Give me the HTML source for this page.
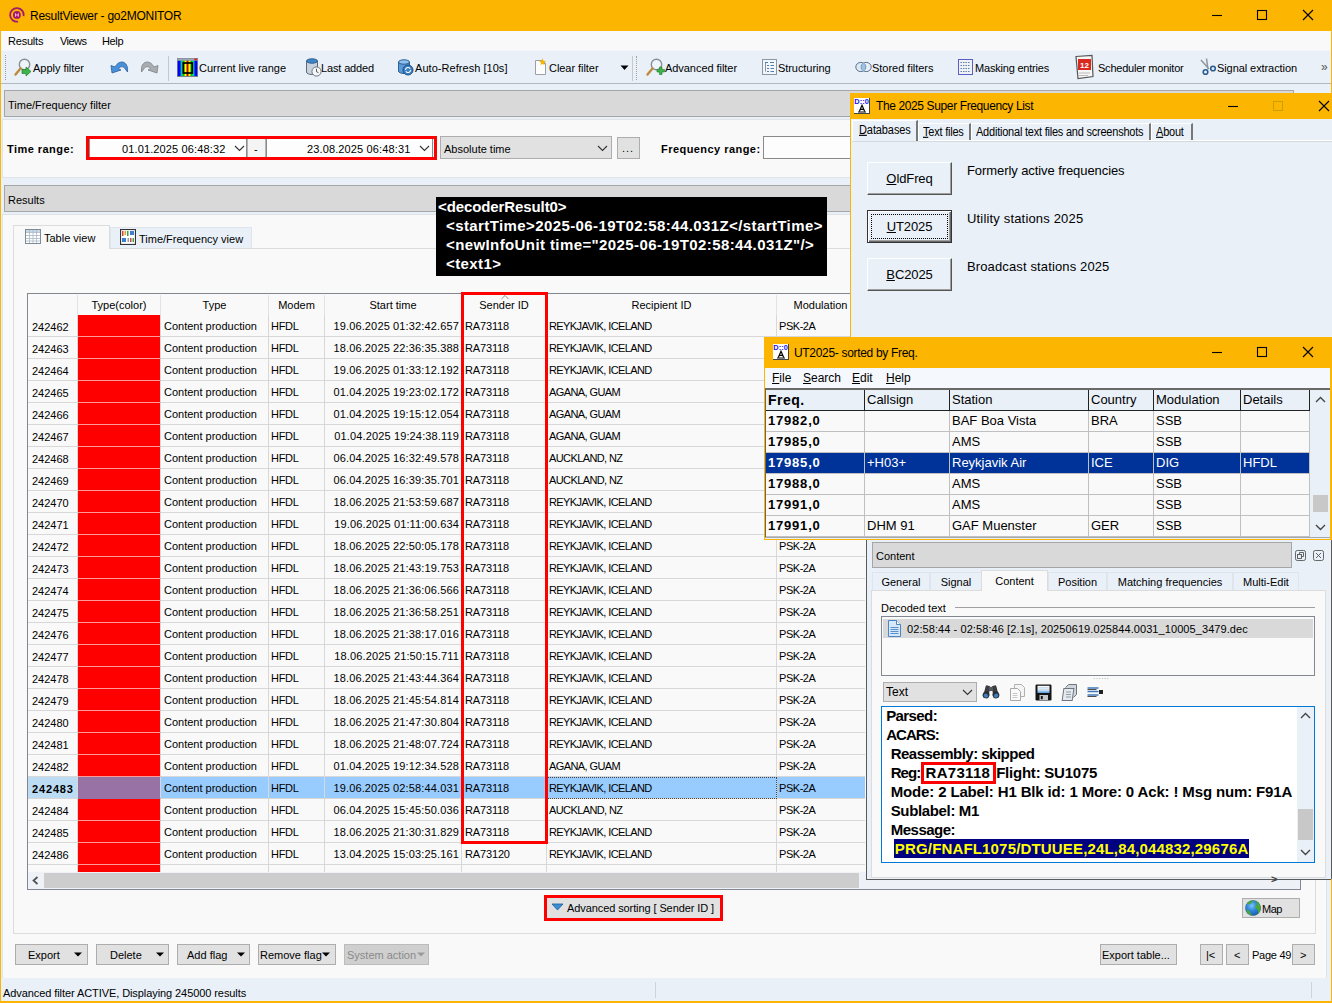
<!DOCTYPE html><html><head><meta charset="utf-8"><title>ResultViewer - go2MONITOR</title><style>
html,body{margin:0;padding:0}
body{width:1332px;height:1003px;overflow:hidden;position:relative;background:#fcb500;font-family:"Liberation Sans",sans-serif;font-size:11px;color:#000}
div,span,svg{position:absolute;box-sizing:border-box}
span.t,span.b{white-space:pre;line-height:14px;height:14px}
span.b{font-weight:bold}
.btn{background:#e1e1e1;border:1px solid #adadad}
.hdr{background:#d9d9d9;border:1px solid #a6a6a6}
.cell{border-right:1px solid #d8d8d8;border-bottom:1px solid #d8d8d8;line-height:23px;white-space:pre;overflow:hidden}
.ut{font-size:13px;line-height:20px;white-space:pre;border-right:1px solid #c0c0c0;border-bottom:1px solid #c0c0c0;overflow:hidden;padding-left:2px}
.ut.f{font-weight:bold;letter-spacing:0.8px}
.ct{font-weight:bold;font-size:15px;line-height:19px;height:19px;white-space:pre;letter-spacing:-0.14px}
.bx{font-weight:bold;font-size:15px;line-height:19px;height:19px;white-space:pre;color:#fff;letter-spacing:0.4px}
u{text-decoration-thickness:1px;text-underline-offset:1px}
</style></head><body>
<div style="left:1px;top:31px;width:1330px;height:970px;background:#e9f0f8"></div>
<svg style="left:0px;top:0px" width="30" height="30" viewBox="0 0 30 30"><path d="M23.600 16.080A6.800 6.800 0 1 0 18.080 21.600" fill="none" stroke="#a3186c" stroke-width="1.800"/><circle cx="16.900" cy="14.900" r="3.900" fill="#a3186c"/><path d="M15.500 13.300v3.400M18.300 13.300v3.400M15.500 15h2.800" stroke="#f0b8d6" stroke-width="1" fill="none"/></svg>
<span class="t" style="left:30px;top:8px;font-size:12px;letter-spacing:-0.25px;line-height:16px;height:16px">ResultViewer - go2MONITOR</span>
<svg style="left:1205px;top:5px" width="120" height="22" viewBox="0 0 120 22"><path d="M7 10.5h10" stroke="#000" stroke-width="1.1" fill="none"/><rect x="52.5" y="5.5" width="9" height="9" stroke="#000" stroke-width="1.1" fill="none"/><path d="M98 5l10 10M108 5l-10 10" stroke="#000" stroke-width="1.1" fill="none"/></svg>
<div style="left:1px;top:31px;width:1330px;height:19px;background:#f9f9f9"></div>
<span class="t" style="left:8px;top:34px;letter-spacing:-0.211px;">Results</span>
<span class="t" style="left:60px;top:34px;letter-spacing:-0.529px;">Views</span>
<span class="t" style="left:102px;top:34px;letter-spacing:-0.356px;">Help</span>
<div style="left:1px;top:50px;width:1330px;height:33px;background:#e9f0f8;border-top:1px solid #f2f6fb"></div>
<div style="left:1px;top:83px;width:1330px;height:1px;background:#b4b8bc"></div>
<div style="left:5px;top:55px;width:2px;height:25px;border-left:1px dotted #9a9a9a;"></div>
<div style="left:636px;top:56px;width:2px;height:24px;border-left:1px dotted #a0a0a0;"></div>
<div style="left:168px;top:56px;width:1px;height:25px;background:#c5c9ce"></div>
<div style="left:632px;top:56px;width:1px;height:25px;background:#c5c9ce"></div>
<span class="t" style="left:33px;top:61px;letter-spacing:-0.029px;">Apply filter</span>
<span class="t" style="left:199px;top:61px;letter-spacing:-0.024px;">Current live range</span>
<span class="t" style="left:321px;top:61px;letter-spacing:-0.144px;">Last added</span>
<span class="t" style="left:415px;top:61px;letter-spacing:0.044px;">Auto-Refresh [10s]</span>
<span class="t" style="left:549px;top:61px;letter-spacing:-0.052px;">Clear filter</span>
<span class="t" style="left:665px;top:61px;letter-spacing:-0.051px;">Advanced filter</span>
<span class="t" style="left:778px;top:61px;letter-spacing:-0.063px;">Structuring</span>
<span class="t" style="left:872px;top:61px;letter-spacing:-0.018px;">Stored filters</span>
<span class="t" style="left:975px;top:61px;letter-spacing:-0.202px;">Masking entries</span>
<span class="t" style="left:1098px;top:61px;letter-spacing:-0.222px;">Scheduler monitor</span>
<span class="t" style="left:1217px;top:61px;letter-spacing:-0.078px;">Signal extraction</span>
<span class="t" style="left:1321px;top:60px;font-size:12px;color:#555">»</span>
<svg style="left:620px;top:65px" width="9" height="6"><path d="M0.5 0.5h8L4.5 5z" fill="#000"/></svg>
<svg style="left:14px;top:58px" width="18" height="19" viewBox="0 0 18 19"><circle cx="10.5" cy="6.5" r="5.2" fill="#eef6fb" stroke="#8a8f94" stroke-width="1.4"/><path d="M6.5 10.5L1.5 16.5" stroke="#c08a3c" stroke-width="2.4" stroke-linecap="round"/><path d="M8 11.5h4v-2.5l5 4.5-5 4.5v-2.5h-4z" fill="#3cb54a" stroke="#1f7a2b" stroke-width="0.7"/></svg>
<svg style="left:110px;top:60px" width="19" height="15" viewBox="0 0 19 15"><path d="M2 13L1 5.5l4 1.5C7 3 11 1 14 2.5c3 1.500 4 5 3.500 9.500l-3-4C13 6 10 6.500 8.500 8.500L11 10z" fill="#4a90d9" stroke="#2a5f9e" stroke-width="0.8"/></svg>
<svg style="left:140px;top:60px" width="19" height="15" viewBox="0 0 19 15"><path d="M17 13l1-7.500-4 1.500C12 3 8 1 5 2.500 2 4 1 7.500 1.500 12l3-4C6 6 9 6.500 10.500 8.500L8 10z" fill="#a9acb0" stroke="#7d8186" stroke-width="0.8"/></svg>
<svg style="left:177px;top:58px" width="21" height="19" viewBox="0 0 21 19"><defs><linearGradient id="sp" x1="0" x2="1" y1="0" y2="0"><stop offset="0" stop-color="#0000f0"/><stop offset="0.1" stop-color="#0000ff"/><stop offset="0.2" stop-color="#00d8b0"/><stop offset="0.3" stop-color="#00b800"/><stop offset="0.4" stop-color="#ffff00"/><stop offset="0.5" stop-color="#c00000"/><stop offset="0.6" stop-color="#ffff00"/><stop offset="0.7" stop-color="#00b800"/><stop offset="0.8" stop-color="#00e0a0"/><stop offset="0.9" stop-color="#0000ff"/><stop offset="1" stop-color="#0000f0"/></linearGradient></defs><rect x="0" y="0" width="21" height="19" fill="#7c838a"/><rect x="0.5" y="0.5" width="20" height="2.3" fill="#9aa6b4"/><rect x="17.300" y="0.600" width="2.800" height="1.600" fill="#e02020"/><rect x="0.800" y="2.800" width="19.400" height="15.200" fill="url(#sp)"/><rect x="6.300" y="5" width="9" height="10" fill="none" stroke="#000" stroke-width="1.700"/></svg>
<svg style="left:305px;top:58px" width="17" height="19" viewBox="0 0 17 19"><path d="M1.500 3v11c0 1.500 2.500 2.500 5.500 2.500s5.500-1 5.500-2.500V3" fill="#c9d3dd" stroke="#5f6b78"/><ellipse cx="7" cy="3" rx="5.500" ry="2.200" fill="#3f86c9" stroke="#2c5f92"/><circle cx="11.500" cy="13.500" r="4.600" fill="#f4f6f8" stroke="#6b7480"/><path d="M11.500 10.800v2.900l2 1" stroke="#444" fill="none" stroke-width="0.9"/></svg>
<svg style="left:397px;top:58px" width="18" height="19" viewBox="0 0 18 19"><path d="M1.500 4v9c0 1.500 2.500 2.500 5.500 2.500s5.500-1 5.500-2.500V4" fill="#5a9ad6" stroke="#2c5f92"/><ellipse cx="7" cy="4" rx="5.500" ry="2.200" fill="#8fc1ee" stroke="#2c5f92"/><circle cx="11" cy="12" r="5" fill="#3b7fc4" stroke="#1d4f86"/><path d="M8.500 12a2.600 2.600 0 0 1 4.800-1.300M13.600 12a2.600 2.600 0 0 1-4.800 1.300" stroke="#fff" fill="none" stroke-width="1.100"/></svg>
<svg style="left:533px;top:58px" width="15" height="19" viewBox="0 0 15 19"><path d="M2.500 2.500h7l3 3v11h-10z" fill="#fdfdfd" stroke="#9aa0a6"/><path d="M9.500 2.500v3h3" fill="none" stroke="#9aa0a6"/><path d="M3.500 0l1 2.500 2.500 0.500-2 1.500 0.500 2.500-2-1.500-2 1.500 0.500-2.500-2-1.500 2.500-0.500z" fill="#f7b500" transform="translate(6,0.300)"/></svg>
<svg style="left:646px;top:58px" width="19" height="19" viewBox="0 0 19 19"><circle cx="10.500" cy="6.500" r="5.200" fill="#eef6fb" stroke="#8a8f94" stroke-width="1.400"/><path d="M6.500 10.500L1.500 16.500" stroke="#c08a3c" stroke-width="2.400" stroke-linecap="round"/><path d="M11 11.500h2.500V9h2.500v2.500h2.500V14H16v2.500h-2.500V14H11z" fill="#3cb54a" stroke="#1f7a2b" stroke-width="0.600"/></svg>
<svg style="left:762px;top:59px" width="15" height="16" viewBox="0 0 15 16"><rect x="0.500" y="0.500" width="14" height="15" fill="#f4f7fa" stroke="#8c97a3"/><path d="M3 3.500h3M8 3.500h4M5 6.500h2M8.500 6.500h3.500M5 9.500h2M8.500 9.500h3.500M5 12.500h2M8.500 12.500h3.500" stroke="#4c7fb5" stroke-width="1.200"/><path d="M3.500 4v8.500" stroke="#777" stroke-width="0.800"/></svg>
<svg style="left:855px;top:61px" width="17" height="12" viewBox="0 0 17 12"><ellipse cx="5.800" cy="6" rx="5" ry="4.600" fill="#dfe9f4" stroke="#55708e"/><ellipse cx="11.200" cy="6" rx="5" ry="4.600" fill="none" stroke="#55708e"/><path d="M8.500 2.100a4.600 4.600 0 0 1 0 7.800 4.600 4.600 0 0 1 0-7.800z" fill="#9cc3ea"/></svg>
<svg style="left:958px;top:59px" width="15" height="16" viewBox="0 0 15 16"><rect x="0.500" y="0.500" width="14" height="15" fill="#eef2f7" stroke="#5a5fc8"/><path d="M2.500 3.500h10M2.500 6.500h10M2.500 9.500h10M2.500 12.500h10" stroke="#5e7fa8" stroke-width="1.200" stroke-dasharray="1.500 1"/></svg>
<svg style="left:1074px;top:54px" width="21" height="26" viewBox="0 0 21 26"><path d="M2 2.500l16-1 1 21-15 2z" fill="#f6f6f6" stroke="#555" stroke-width="1.200"/><rect x="4" y="5" width="13" height="11" fill="#d9281e"/><text x="10.500" y="13.500" font-size="8" font-weight="bold" font-family="Liberation Sans, sans-serif" fill="#fff" text-anchor="middle">12</text><path d="M5 19h11M5 21.500h9" stroke="#bbb"/></svg>
<svg style="left:1200px;top:58px" width="17" height="18" viewBox="0 0 17 18"><path d="M1 2l8 9M6.500 0.500l1.500 11" stroke="#8e969e" stroke-width="1.500" fill="none"/><circle cx="5.500" cy="14" r="2.300" fill="none" stroke="#2b5d8f" stroke-width="1.600"/><circle cx="13" cy="10.500" r="2.300" fill="none" stroke="#2b5d8f" stroke-width="1.600"/></svg>
<div class="hdr" style="left:4px;top:90px;width:1290px;height:27px;"></div>
<span class="t" style="left:8px;top:98px;">Time/Frequency filter</span>
<div style="left:2px;top:119px;width:1325px;height:59px;background:#f9f9f9;border:1px solid #dfe3e8"></div>
<span class="b" style="left:7px;top:142px;font-size:11px;letter-spacing:0.45px">Time range:</span>
<div style="left:89px;top:138px;width:158px;height:21px;background:#fdfdfd;border:1px solid #8a8a8a"></div>
<span class="t" style="left:122px;top:142px;letter-spacing:0.13px">01.01.2025 06:48:32</span>
<div style="left:247px;top:138px;width:19px;height:21px;background:#f4f4f4;border:1px solid #b5b5b5"></div>
<span class="t" style="left:254px;top:142px;">-</span>
<div style="left:266px;top:138px;width:167px;height:21px;background:#fdfdfd;border:1px solid #8a8a8a"></div>
<span class="t" style="left:307px;top:142px;letter-spacing:0.13px">23.08.2025 06:48:31</span>
<svg style="left:234px;top:145px" width="11" height="7" viewBox="0 0 11 7"><path d="M1 1l4.500 4.500L10 1" fill="none" stroke="#333" stroke-width="1.100"/></svg>
<svg style="left:419px;top:145px" width="11" height="7" viewBox="0 0 11 7"><path d="M1 1l4.500 4.500L10 1" fill="none" stroke="#333" stroke-width="1.100"/></svg>
<div style="left:86px;top:136px;width:351px;height:24px;border:3px solid #f00"></div>
<div class="btn" style="left:440px;top:136px;width:172px;height:23px;"></div>
<span class="t" style="left:444px;top:142px;">Absolute time</span>
<svg style="left:597px;top:145px" width="11" height="7" viewBox="0 0 11 7"><path d="M1 1l4.500 4.500L10 1" fill="none" stroke="#333" stroke-width="1.100"/></svg>
<div class="btn" style="left:617px;top:137px;width:23px;height:22px;"></div>
<span class="t" style="left:622px;top:141px;letter-spacing:1px">...</span>
<span class="b" style="left:661px;top:142px;letter-spacing:0.45px">Frequency range:</span>
<div style="left:763px;top:136px;width:120px;height:23px;background:#fdfdfd;border:1px solid #8a8a8a"></div>
<div class="hdr" style="left:4px;top:185px;width:1290px;height:27px;"></div>
<span class="t" style="left:8px;top:193px;">Results</span>
<div style="left:2px;top:214px;width:1325px;height:764px;background:#f9f9f9;border:1px solid #dfe3e8;border-bottom:none"></div>
<div style="left:13px;top:248px;width:1303px;height:686px;background:#f9f9f9;border:1px solid #dcdcdc"></div>
<div style="left:13px;top:225px;width:97px;height:24px;background:#f9f9f9;border:1px solid #dcdcdc;border-bottom:none"></div>
<div style="left:110px;top:227px;width:142px;height:21px;background:#e9f0f8;border:1px solid #dfe5ec;border-bottom:none"></div>
<span class="t" style="left:44px;top:231px;">Table view</span>
<span class="t" style="left:139px;top:232px;">Time/Frequency view</span>
<svg style="left:25px;top:229px" width="16" height="15" viewBox="0 0 16 15"><rect x="0.500" y="0.500" width="15" height="14" fill="#fff" stroke="#7d8a98"/><rect x="1" y="1" width="14" height="2.500" fill="#c9d6e4"/><path d="M1 3.500h14M1 6.500h14M1 9.500h14M1 12h14M4.500 1v13M8 1v13M11.500 1v13" stroke="#a9b7c6" stroke-width="0.800"/></svg>
<svg style="left:120px;top:229px" width="16" height="16" viewBox="0 0 16 16"><rect x="0.500" y="0.500" width="15" height="15" fill="#fff" stroke="#333" stroke-width="1.200"/><rect x="2" y="2" width="1.500" height="5" fill="#d04040"/><rect x="4.500" y="2" width="1.500" height="4" fill="#e0a030"/><rect x="7" y="2" width="1.500" height="5" fill="#40a040"/><rect x="10" y="2" width="4" height="4" fill="#3b7fd0"/><rect x="2" y="9" width="4" height="4" fill="#3b7fd0"/><rect x="7.500" y="9" width="1.500" height="4" fill="#999"/><rect x="10" y="9" width="1.500" height="4" fill="#d04040"/><rect x="12.500" y="9" width="1.500" height="4" fill="#40a040"/></svg>
<div style="left:27px;top:293px;width:1274px;height:597px;background:#f9f9f9;border:1px solid #828790"></div>
<div style="left:28px;top:295px;width:50px;height:20px;border-right:1px solid #e3e3e3;text-align:center;line-height:20px;white-space:pre"></div>
<div style="left:78px;top:295px;width:83px;height:20px;border-right:1px solid #e3e3e3;text-align:center;line-height:20px;white-space:pre">Type(color)</div>
<div style="left:161px;top:295px;width:108px;height:20px;border-right:1px solid #e3e3e3;text-align:center;line-height:20px;white-space:pre">Type</div>
<div style="left:269px;top:295px;width:56px;height:20px;border-right:1px solid #e3e3e3;text-align:center;line-height:20px;white-space:pre">Modem</div>
<div style="left:325px;top:295px;width:137px;height:20px;border-right:1px solid #e3e3e3;text-align:center;line-height:20px;white-space:pre">Start time</div>
<div style="left:462px;top:295px;width:85px;height:20px;border-right:1px solid #e3e3e3;text-align:center;line-height:20px;white-space:pre">Sender ID</div>
<div style="left:547px;top:295px;width:230px;height:20px;border-right:1px solid #e3e3e3;text-align:center;line-height:20px;white-space:pre">Recipient ID</div>
<div style="left:777px;top:295px;width:88px;height:20px;border-right:1px solid #e3e3e3;text-align:center;line-height:20px;white-space:pre">Modulation</div>
<svg style="left:501px;top:295px" width="8" height="4.500" viewBox="0 0 9 5"><path d="M0.500 4.500L4.500 0.500 8.500 4.500" fill="none" stroke="#777" stroke-width="0.900"/></svg>
<div class="cell" style="left:28px;top:315px;width:50px;height:22px;padding-left:4px;line-height:25px">242462</div>
<div style="left:78px;top:315px;width:83px;height:22px;background:#ff0000;border-right:1px solid #d8d8d8;border-bottom:1px solid #ff9a9a"></div>
<div class="cell" style="left:161px;top:315px;width:108px;height:22px;padding-left:3px">Content production</div>
<div class="cell" style="left:269px;top:315px;width:56px;height:22px;padding-left:2px;letter-spacing:-0.3px">HFDL</div>
<div class="cell" style="left:325px;top:315px;width:137px;height:22px;text-align:right;padding-right:2px;letter-spacing:0.14px">19.06.2025 01:32:42.657</div>
<div class="cell" style="left:462px;top:315px;width:85px;height:22px;padding-left:3px;letter-spacing:-0.15px">RA73118</div>
<div class="cell" style="left:547px;top:315px;width:230px;height:22px;padding-left:2px;letter-spacing:-0.6px">REYKJAVIK, ICELAND</div>
<div class="cell" style="left:777px;top:315px;width:88px;height:22px;padding-left:2px;letter-spacing:-0.45px;border-right:none">PSK-2A</div>
<div class="cell" style="left:28px;top:337px;width:50px;height:22px;padding-left:4px;line-height:25px">242463</div>
<div style="left:78px;top:337px;width:83px;height:22px;background:#ff0000;border-right:1px solid #d8d8d8;border-bottom:1px solid #ff9a9a"></div>
<div class="cell" style="left:161px;top:337px;width:108px;height:22px;padding-left:3px">Content production</div>
<div class="cell" style="left:269px;top:337px;width:56px;height:22px;padding-left:2px;letter-spacing:-0.3px">HFDL</div>
<div class="cell" style="left:325px;top:337px;width:137px;height:22px;text-align:right;padding-right:2px;letter-spacing:0.14px">18.06.2025 22:36:35.388</div>
<div class="cell" style="left:462px;top:337px;width:85px;height:22px;padding-left:3px;letter-spacing:-0.15px">RA73118</div>
<div class="cell" style="left:547px;top:337px;width:230px;height:22px;padding-left:2px;letter-spacing:-0.6px">REYKJAVIK, ICELAND</div>
<div class="cell" style="left:777px;top:337px;width:88px;height:22px;padding-left:2px;letter-spacing:-0.45px;border-right:none">PSK-2A</div>
<div class="cell" style="left:28px;top:359px;width:50px;height:22px;padding-left:4px;line-height:25px">242464</div>
<div style="left:78px;top:359px;width:83px;height:22px;background:#ff0000;border-right:1px solid #d8d8d8;border-bottom:1px solid #ff9a9a"></div>
<div class="cell" style="left:161px;top:359px;width:108px;height:22px;padding-left:3px">Content production</div>
<div class="cell" style="left:269px;top:359px;width:56px;height:22px;padding-left:2px;letter-spacing:-0.3px">HFDL</div>
<div class="cell" style="left:325px;top:359px;width:137px;height:22px;text-align:right;padding-right:2px;letter-spacing:0.14px">19.06.2025 01:33:12.192</div>
<div class="cell" style="left:462px;top:359px;width:85px;height:22px;padding-left:3px;letter-spacing:-0.15px">RA73118</div>
<div class="cell" style="left:547px;top:359px;width:230px;height:22px;padding-left:2px;letter-spacing:-0.6px">REYKJAVIK, ICELAND</div>
<div class="cell" style="left:777px;top:359px;width:88px;height:22px;padding-left:2px;letter-spacing:-0.45px;border-right:none">PSK-2A</div>
<div class="cell" style="left:28px;top:381px;width:50px;height:22px;padding-left:4px;line-height:25px">242465</div>
<div style="left:78px;top:381px;width:83px;height:22px;background:#ff0000;border-right:1px solid #d8d8d8;border-bottom:1px solid #ff9a9a"></div>
<div class="cell" style="left:161px;top:381px;width:108px;height:22px;padding-left:3px">Content production</div>
<div class="cell" style="left:269px;top:381px;width:56px;height:22px;padding-left:2px;letter-spacing:-0.3px">HFDL</div>
<div class="cell" style="left:325px;top:381px;width:137px;height:22px;text-align:right;padding-right:2px;letter-spacing:0.14px">01.04.2025 19:23:02.172</div>
<div class="cell" style="left:462px;top:381px;width:85px;height:22px;padding-left:3px;letter-spacing:-0.15px">RA73118</div>
<div class="cell" style="left:547px;top:381px;width:230px;height:22px;padding-left:2px;letter-spacing:-0.6px">AGANA, GUAM</div>
<div class="cell" style="left:777px;top:381px;width:88px;height:22px;padding-left:2px;letter-spacing:-0.45px;border-right:none">PSK-2A</div>
<div class="cell" style="left:28px;top:403px;width:50px;height:22px;padding-left:4px;line-height:25px">242466</div>
<div style="left:78px;top:403px;width:83px;height:22px;background:#ff0000;border-right:1px solid #d8d8d8;border-bottom:1px solid #ff9a9a"></div>
<div class="cell" style="left:161px;top:403px;width:108px;height:22px;padding-left:3px">Content production</div>
<div class="cell" style="left:269px;top:403px;width:56px;height:22px;padding-left:2px;letter-spacing:-0.3px">HFDL</div>
<div class="cell" style="left:325px;top:403px;width:137px;height:22px;text-align:right;padding-right:2px;letter-spacing:0.14px">01.04.2025 19:15:12.054</div>
<div class="cell" style="left:462px;top:403px;width:85px;height:22px;padding-left:3px;letter-spacing:-0.15px">RA73118</div>
<div class="cell" style="left:547px;top:403px;width:230px;height:22px;padding-left:2px;letter-spacing:-0.6px">AGANA, GUAM</div>
<div class="cell" style="left:777px;top:403px;width:88px;height:22px;padding-left:2px;letter-spacing:-0.45px;border-right:none">PSK-2A</div>
<div class="cell" style="left:28px;top:425px;width:50px;height:22px;padding-left:4px;line-height:25px">242467</div>
<div style="left:78px;top:425px;width:83px;height:22px;background:#ff0000;border-right:1px solid #d8d8d8;border-bottom:1px solid #ff9a9a"></div>
<div class="cell" style="left:161px;top:425px;width:108px;height:22px;padding-left:3px">Content production</div>
<div class="cell" style="left:269px;top:425px;width:56px;height:22px;padding-left:2px;letter-spacing:-0.3px">HFDL</div>
<div class="cell" style="left:325px;top:425px;width:137px;height:22px;text-align:right;padding-right:2px;letter-spacing:0.14px">01.04.2025 19:24:38.119</div>
<div class="cell" style="left:462px;top:425px;width:85px;height:22px;padding-left:3px;letter-spacing:-0.15px">RA73118</div>
<div class="cell" style="left:547px;top:425px;width:230px;height:22px;padding-left:2px;letter-spacing:-0.6px">AGANA, GUAM</div>
<div class="cell" style="left:777px;top:425px;width:88px;height:22px;padding-left:2px;letter-spacing:-0.45px;border-right:none">PSK-2A</div>
<div class="cell" style="left:28px;top:447px;width:50px;height:22px;padding-left:4px;line-height:25px">242468</div>
<div style="left:78px;top:447px;width:83px;height:22px;background:#ff0000;border-right:1px solid #d8d8d8;border-bottom:1px solid #ff9a9a"></div>
<div class="cell" style="left:161px;top:447px;width:108px;height:22px;padding-left:3px">Content production</div>
<div class="cell" style="left:269px;top:447px;width:56px;height:22px;padding-left:2px;letter-spacing:-0.3px">HFDL</div>
<div class="cell" style="left:325px;top:447px;width:137px;height:22px;text-align:right;padding-right:2px;letter-spacing:0.14px">06.04.2025 16:32:49.578</div>
<div class="cell" style="left:462px;top:447px;width:85px;height:22px;padding-left:3px;letter-spacing:-0.15px">RA73118</div>
<div class="cell" style="left:547px;top:447px;width:230px;height:22px;padding-left:2px;letter-spacing:-0.6px">AUCKLAND, NZ</div>
<div class="cell" style="left:777px;top:447px;width:88px;height:22px;padding-left:2px;letter-spacing:-0.45px;border-right:none">PSK-2A</div>
<div class="cell" style="left:28px;top:469px;width:50px;height:22px;padding-left:4px;line-height:25px">242469</div>
<div style="left:78px;top:469px;width:83px;height:22px;background:#ff0000;border-right:1px solid #d8d8d8;border-bottom:1px solid #ff9a9a"></div>
<div class="cell" style="left:161px;top:469px;width:108px;height:22px;padding-left:3px">Content production</div>
<div class="cell" style="left:269px;top:469px;width:56px;height:22px;padding-left:2px;letter-spacing:-0.3px">HFDL</div>
<div class="cell" style="left:325px;top:469px;width:137px;height:22px;text-align:right;padding-right:2px;letter-spacing:0.14px">06.04.2025 16:39:35.701</div>
<div class="cell" style="left:462px;top:469px;width:85px;height:22px;padding-left:3px;letter-spacing:-0.15px">RA73118</div>
<div class="cell" style="left:547px;top:469px;width:230px;height:22px;padding-left:2px;letter-spacing:-0.6px">AUCKLAND, NZ</div>
<div class="cell" style="left:777px;top:469px;width:88px;height:22px;padding-left:2px;letter-spacing:-0.45px;border-right:none">PSK-2A</div>
<div class="cell" style="left:28px;top:491px;width:50px;height:22px;padding-left:4px;line-height:25px">242470</div>
<div style="left:78px;top:491px;width:83px;height:22px;background:#ff0000;border-right:1px solid #d8d8d8;border-bottom:1px solid #ff9a9a"></div>
<div class="cell" style="left:161px;top:491px;width:108px;height:22px;padding-left:3px">Content production</div>
<div class="cell" style="left:269px;top:491px;width:56px;height:22px;padding-left:2px;letter-spacing:-0.3px">HFDL</div>
<div class="cell" style="left:325px;top:491px;width:137px;height:22px;text-align:right;padding-right:2px;letter-spacing:0.14px">18.06.2025 21:53:59.687</div>
<div class="cell" style="left:462px;top:491px;width:85px;height:22px;padding-left:3px;letter-spacing:-0.15px">RA73118</div>
<div class="cell" style="left:547px;top:491px;width:230px;height:22px;padding-left:2px;letter-spacing:-0.6px">REYKJAVIK, ICELAND</div>
<div class="cell" style="left:777px;top:491px;width:88px;height:22px;padding-left:2px;letter-spacing:-0.45px;border-right:none">PSK-2A</div>
<div class="cell" style="left:28px;top:513px;width:50px;height:22px;padding-left:4px;line-height:25px">242471</div>
<div style="left:78px;top:513px;width:83px;height:22px;background:#ff0000;border-right:1px solid #d8d8d8;border-bottom:1px solid #ff9a9a"></div>
<div class="cell" style="left:161px;top:513px;width:108px;height:22px;padding-left:3px">Content production</div>
<div class="cell" style="left:269px;top:513px;width:56px;height:22px;padding-left:2px;letter-spacing:-0.3px">HFDL</div>
<div class="cell" style="left:325px;top:513px;width:137px;height:22px;text-align:right;padding-right:2px;letter-spacing:0.14px">19.06.2025 01:11:00.634</div>
<div class="cell" style="left:462px;top:513px;width:85px;height:22px;padding-left:3px;letter-spacing:-0.15px">RA73118</div>
<div class="cell" style="left:547px;top:513px;width:230px;height:22px;padding-left:2px;letter-spacing:-0.6px">REYKJAVIK, ICELAND</div>
<div class="cell" style="left:777px;top:513px;width:88px;height:22px;padding-left:2px;letter-spacing:-0.45px;border-right:none">PSK-2A</div>
<div class="cell" style="left:28px;top:535px;width:50px;height:22px;padding-left:4px;line-height:25px">242472</div>
<div style="left:78px;top:535px;width:83px;height:22px;background:#ff0000;border-right:1px solid #d8d8d8;border-bottom:1px solid #ff9a9a"></div>
<div class="cell" style="left:161px;top:535px;width:108px;height:22px;padding-left:3px">Content production</div>
<div class="cell" style="left:269px;top:535px;width:56px;height:22px;padding-left:2px;letter-spacing:-0.3px">HFDL</div>
<div class="cell" style="left:325px;top:535px;width:137px;height:22px;text-align:right;padding-right:2px;letter-spacing:0.14px">18.06.2025 22:50:05.178</div>
<div class="cell" style="left:462px;top:535px;width:85px;height:22px;padding-left:3px;letter-spacing:-0.15px">RA73118</div>
<div class="cell" style="left:547px;top:535px;width:230px;height:22px;padding-left:2px;letter-spacing:-0.6px">REYKJAVIK, ICELAND</div>
<div class="cell" style="left:777px;top:535px;width:88px;height:22px;padding-left:2px;letter-spacing:-0.45px;border-right:none">PSK-2A</div>
<div class="cell" style="left:28px;top:557px;width:50px;height:22px;padding-left:4px;line-height:25px">242473</div>
<div style="left:78px;top:557px;width:83px;height:22px;background:#ff0000;border-right:1px solid #d8d8d8;border-bottom:1px solid #ff9a9a"></div>
<div class="cell" style="left:161px;top:557px;width:108px;height:22px;padding-left:3px">Content production</div>
<div class="cell" style="left:269px;top:557px;width:56px;height:22px;padding-left:2px;letter-spacing:-0.3px">HFDL</div>
<div class="cell" style="left:325px;top:557px;width:137px;height:22px;text-align:right;padding-right:2px;letter-spacing:0.14px">18.06.2025 21:43:19.753</div>
<div class="cell" style="left:462px;top:557px;width:85px;height:22px;padding-left:3px;letter-spacing:-0.15px">RA73118</div>
<div class="cell" style="left:547px;top:557px;width:230px;height:22px;padding-left:2px;letter-spacing:-0.6px">REYKJAVIK, ICELAND</div>
<div class="cell" style="left:777px;top:557px;width:88px;height:22px;padding-left:2px;letter-spacing:-0.45px;border-right:none">PSK-2A</div>
<div class="cell" style="left:28px;top:579px;width:50px;height:22px;padding-left:4px;line-height:25px">242474</div>
<div style="left:78px;top:579px;width:83px;height:22px;background:#ff0000;border-right:1px solid #d8d8d8;border-bottom:1px solid #ff9a9a"></div>
<div class="cell" style="left:161px;top:579px;width:108px;height:22px;padding-left:3px">Content production</div>
<div class="cell" style="left:269px;top:579px;width:56px;height:22px;padding-left:2px;letter-spacing:-0.3px">HFDL</div>
<div class="cell" style="left:325px;top:579px;width:137px;height:22px;text-align:right;padding-right:2px;letter-spacing:0.14px">18.06.2025 21:36:06.566</div>
<div class="cell" style="left:462px;top:579px;width:85px;height:22px;padding-left:3px;letter-spacing:-0.15px">RA73118</div>
<div class="cell" style="left:547px;top:579px;width:230px;height:22px;padding-left:2px;letter-spacing:-0.6px">REYKJAVIK, ICELAND</div>
<div class="cell" style="left:777px;top:579px;width:88px;height:22px;padding-left:2px;letter-spacing:-0.45px;border-right:none">PSK-2A</div>
<div class="cell" style="left:28px;top:601px;width:50px;height:22px;padding-left:4px;line-height:25px">242475</div>
<div style="left:78px;top:601px;width:83px;height:22px;background:#ff0000;border-right:1px solid #d8d8d8;border-bottom:1px solid #ff9a9a"></div>
<div class="cell" style="left:161px;top:601px;width:108px;height:22px;padding-left:3px">Content production</div>
<div class="cell" style="left:269px;top:601px;width:56px;height:22px;padding-left:2px;letter-spacing:-0.3px">HFDL</div>
<div class="cell" style="left:325px;top:601px;width:137px;height:22px;text-align:right;padding-right:2px;letter-spacing:0.14px">18.06.2025 21:36:58.251</div>
<div class="cell" style="left:462px;top:601px;width:85px;height:22px;padding-left:3px;letter-spacing:-0.15px">RA73118</div>
<div class="cell" style="left:547px;top:601px;width:230px;height:22px;padding-left:2px;letter-spacing:-0.6px">REYKJAVIK, ICELAND</div>
<div class="cell" style="left:777px;top:601px;width:88px;height:22px;padding-left:2px;letter-spacing:-0.45px;border-right:none">PSK-2A</div>
<div class="cell" style="left:28px;top:623px;width:50px;height:22px;padding-left:4px;line-height:25px">242476</div>
<div style="left:78px;top:623px;width:83px;height:22px;background:#ff0000;border-right:1px solid #d8d8d8;border-bottom:1px solid #ff9a9a"></div>
<div class="cell" style="left:161px;top:623px;width:108px;height:22px;padding-left:3px">Content production</div>
<div class="cell" style="left:269px;top:623px;width:56px;height:22px;padding-left:2px;letter-spacing:-0.3px">HFDL</div>
<div class="cell" style="left:325px;top:623px;width:137px;height:22px;text-align:right;padding-right:2px;letter-spacing:0.14px">18.06.2025 21:38:17.016</div>
<div class="cell" style="left:462px;top:623px;width:85px;height:22px;padding-left:3px;letter-spacing:-0.15px">RA73118</div>
<div class="cell" style="left:547px;top:623px;width:230px;height:22px;padding-left:2px;letter-spacing:-0.6px">REYKJAVIK, ICELAND</div>
<div class="cell" style="left:777px;top:623px;width:88px;height:22px;padding-left:2px;letter-spacing:-0.45px;border-right:none">PSK-2A</div>
<div class="cell" style="left:28px;top:645px;width:50px;height:22px;padding-left:4px;line-height:25px">242477</div>
<div style="left:78px;top:645px;width:83px;height:22px;background:#ff0000;border-right:1px solid #d8d8d8;border-bottom:1px solid #ff9a9a"></div>
<div class="cell" style="left:161px;top:645px;width:108px;height:22px;padding-left:3px">Content production</div>
<div class="cell" style="left:269px;top:645px;width:56px;height:22px;padding-left:2px;letter-spacing:-0.3px">HFDL</div>
<div class="cell" style="left:325px;top:645px;width:137px;height:22px;text-align:right;padding-right:2px;letter-spacing:0.14px">18.06.2025 21:50:15.711</div>
<div class="cell" style="left:462px;top:645px;width:85px;height:22px;padding-left:3px;letter-spacing:-0.15px">RA73118</div>
<div class="cell" style="left:547px;top:645px;width:230px;height:22px;padding-left:2px;letter-spacing:-0.6px">REYKJAVIK, ICELAND</div>
<div class="cell" style="left:777px;top:645px;width:88px;height:22px;padding-left:2px;letter-spacing:-0.45px;border-right:none">PSK-2A</div>
<div class="cell" style="left:28px;top:667px;width:50px;height:22px;padding-left:4px;line-height:25px">242478</div>
<div style="left:78px;top:667px;width:83px;height:22px;background:#ff0000;border-right:1px solid #d8d8d8;border-bottom:1px solid #ff9a9a"></div>
<div class="cell" style="left:161px;top:667px;width:108px;height:22px;padding-left:3px">Content production</div>
<div class="cell" style="left:269px;top:667px;width:56px;height:22px;padding-left:2px;letter-spacing:-0.3px">HFDL</div>
<div class="cell" style="left:325px;top:667px;width:137px;height:22px;text-align:right;padding-right:2px;letter-spacing:0.14px">18.06.2025 21:43:44.364</div>
<div class="cell" style="left:462px;top:667px;width:85px;height:22px;padding-left:3px;letter-spacing:-0.15px">RA73118</div>
<div class="cell" style="left:547px;top:667px;width:230px;height:22px;padding-left:2px;letter-spacing:-0.6px">REYKJAVIK, ICELAND</div>
<div class="cell" style="left:777px;top:667px;width:88px;height:22px;padding-left:2px;letter-spacing:-0.45px;border-right:none">PSK-2A</div>
<div class="cell" style="left:28px;top:689px;width:50px;height:22px;padding-left:4px;line-height:25px">242479</div>
<div style="left:78px;top:689px;width:83px;height:22px;background:#ff0000;border-right:1px solid #d8d8d8;border-bottom:1px solid #ff9a9a"></div>
<div class="cell" style="left:161px;top:689px;width:108px;height:22px;padding-left:3px">Content production</div>
<div class="cell" style="left:269px;top:689px;width:56px;height:22px;padding-left:2px;letter-spacing:-0.3px">HFDL</div>
<div class="cell" style="left:325px;top:689px;width:137px;height:22px;text-align:right;padding-right:2px;letter-spacing:0.14px">18.06.2025 21:45:54.814</div>
<div class="cell" style="left:462px;top:689px;width:85px;height:22px;padding-left:3px;letter-spacing:-0.15px">RA73118</div>
<div class="cell" style="left:547px;top:689px;width:230px;height:22px;padding-left:2px;letter-spacing:-0.6px">REYKJAVIK, ICELAND</div>
<div class="cell" style="left:777px;top:689px;width:88px;height:22px;padding-left:2px;letter-spacing:-0.45px;border-right:none">PSK-2A</div>
<div class="cell" style="left:28px;top:711px;width:50px;height:22px;padding-left:4px;line-height:25px">242480</div>
<div style="left:78px;top:711px;width:83px;height:22px;background:#ff0000;border-right:1px solid #d8d8d8;border-bottom:1px solid #ff9a9a"></div>
<div class="cell" style="left:161px;top:711px;width:108px;height:22px;padding-left:3px">Content production</div>
<div class="cell" style="left:269px;top:711px;width:56px;height:22px;padding-left:2px;letter-spacing:-0.3px">HFDL</div>
<div class="cell" style="left:325px;top:711px;width:137px;height:22px;text-align:right;padding-right:2px;letter-spacing:0.14px">18.06.2025 21:47:30.804</div>
<div class="cell" style="left:462px;top:711px;width:85px;height:22px;padding-left:3px;letter-spacing:-0.15px">RA73118</div>
<div class="cell" style="left:547px;top:711px;width:230px;height:22px;padding-left:2px;letter-spacing:-0.6px">REYKJAVIK, ICELAND</div>
<div class="cell" style="left:777px;top:711px;width:88px;height:22px;padding-left:2px;letter-spacing:-0.45px;border-right:none">PSK-2A</div>
<div class="cell" style="left:28px;top:733px;width:50px;height:22px;padding-left:4px;line-height:25px">242481</div>
<div style="left:78px;top:733px;width:83px;height:22px;background:#ff0000;border-right:1px solid #d8d8d8;border-bottom:1px solid #ff9a9a"></div>
<div class="cell" style="left:161px;top:733px;width:108px;height:22px;padding-left:3px">Content production</div>
<div class="cell" style="left:269px;top:733px;width:56px;height:22px;padding-left:2px;letter-spacing:-0.3px">HFDL</div>
<div class="cell" style="left:325px;top:733px;width:137px;height:22px;text-align:right;padding-right:2px;letter-spacing:0.14px">18.06.2025 21:48:07.724</div>
<div class="cell" style="left:462px;top:733px;width:85px;height:22px;padding-left:3px;letter-spacing:-0.15px">RA73118</div>
<div class="cell" style="left:547px;top:733px;width:230px;height:22px;padding-left:2px;letter-spacing:-0.6px">REYKJAVIK, ICELAND</div>
<div class="cell" style="left:777px;top:733px;width:88px;height:22px;padding-left:2px;letter-spacing:-0.45px;border-right:none">PSK-2A</div>
<div class="cell" style="left:28px;top:755px;width:50px;height:22px;padding-left:4px;line-height:25px">242482</div>
<div style="left:78px;top:755px;width:83px;height:22px;background:#ff0000;border-right:1px solid #d8d8d8;border-bottom:1px solid #ff9a9a"></div>
<div class="cell" style="left:161px;top:755px;width:108px;height:22px;padding-left:3px">Content production</div>
<div class="cell" style="left:269px;top:755px;width:56px;height:22px;padding-left:2px;letter-spacing:-0.3px">HFDL</div>
<div class="cell" style="left:325px;top:755px;width:137px;height:22px;text-align:right;padding-right:2px;letter-spacing:0.14px">01.04.2025 19:12:34.528</div>
<div class="cell" style="left:462px;top:755px;width:85px;height:22px;padding-left:3px;letter-spacing:-0.15px">RA73118</div>
<div class="cell" style="left:547px;top:755px;width:230px;height:22px;padding-left:2px;letter-spacing:-0.6px">AGANA, GUAM</div>
<div class="cell" style="left:777px;top:755px;width:88px;height:22px;padding-left:2px;letter-spacing:-0.45px;border-right:none">PSK-2A</div>
<div class="cell" style="left:28px;top:777px;width:50px;height:22px;background:#bcdcf4;font-weight:bold;letter-spacing:0.85px;padding-left:4px;line-height:25px">242483</div>
<div style="left:78px;top:777px;width:83px;height:22px;background:#9871a5;border-right:1px solid #d8d8d8;border-bottom:1px solid #9871a5"></div>
<div class="cell" style="left:161px;top:777px;width:108px;height:22px;background:#99ccfe;padding-left:3px">Content production</div>
<div class="cell" style="left:269px;top:777px;width:56px;height:22px;background:#99ccfe;padding-left:2px;letter-spacing:-0.3px">HFDL</div>
<div class="cell" style="left:325px;top:777px;width:137px;height:22px;background:#99ccfe;text-align:right;padding-right:2px;letter-spacing:0.14px">19.06.2025 02:58:44.031</div>
<div class="cell" style="left:462px;top:777px;width:85px;height:22px;background:#99ccfe;padding-left:3px;letter-spacing:-0.15px">RA73118</div>
<div class="cell" style="left:547px;top:777px;width:230px;height:22px;background:#99ccfe;padding-left:2px;letter-spacing:-0.6px;outline:1px dotted #444;outline-offset:-1px">REYKJAVIK, ICELAND</div>
<div class="cell" style="left:777px;top:777px;width:88px;height:22px;background:#99ccfe;padding-left:2px;letter-spacing:-0.45px;border-right:none">PSK-2A</div>
<div class="cell" style="left:28px;top:799px;width:50px;height:22px;padding-left:4px;line-height:25px">242484</div>
<div style="left:78px;top:799px;width:83px;height:22px;background:#ff0000;border-right:1px solid #d8d8d8;border-bottom:1px solid #ff9a9a"></div>
<div class="cell" style="left:161px;top:799px;width:108px;height:22px;padding-left:3px">Content production</div>
<div class="cell" style="left:269px;top:799px;width:56px;height:22px;padding-left:2px;letter-spacing:-0.3px">HFDL</div>
<div class="cell" style="left:325px;top:799px;width:137px;height:22px;text-align:right;padding-right:2px;letter-spacing:0.14px">06.04.2025 15:45:50.036</div>
<div class="cell" style="left:462px;top:799px;width:85px;height:22px;padding-left:3px;letter-spacing:-0.15px">RA73118</div>
<div class="cell" style="left:547px;top:799px;width:230px;height:22px;padding-left:2px;letter-spacing:-0.6px">AUCKLAND, NZ</div>
<div class="cell" style="left:777px;top:799px;width:88px;height:22px;padding-left:2px;letter-spacing:-0.45px;border-right:none">PSK-2A</div>
<div class="cell" style="left:28px;top:821px;width:50px;height:22px;padding-left:4px;line-height:25px">242485</div>
<div style="left:78px;top:821px;width:83px;height:22px;background:#ff0000;border-right:1px solid #d8d8d8;border-bottom:1px solid #ff9a9a"></div>
<div class="cell" style="left:161px;top:821px;width:108px;height:22px;padding-left:3px">Content production</div>
<div class="cell" style="left:269px;top:821px;width:56px;height:22px;padding-left:2px;letter-spacing:-0.3px">HFDL</div>
<div class="cell" style="left:325px;top:821px;width:137px;height:22px;text-align:right;padding-right:2px;letter-spacing:0.14px">18.06.2025 21:30:31.829</div>
<div class="cell" style="left:462px;top:821px;width:85px;height:22px;padding-left:3px;letter-spacing:-0.15px">RA73118</div>
<div class="cell" style="left:547px;top:821px;width:230px;height:22px;padding-left:2px;letter-spacing:-0.6px">REYKJAVIK, ICELAND</div>
<div class="cell" style="left:777px;top:821px;width:88px;height:22px;padding-left:2px;letter-spacing:-0.45px;border-right:none">PSK-2A</div>
<div class="cell" style="left:28px;top:843px;width:50px;height:22px;padding-left:4px;line-height:25px">242486</div>
<div style="left:78px;top:843px;width:83px;height:22px;background:#ff0000;border-right:1px solid #d8d8d8;border-bottom:1px solid #ff9a9a"></div>
<div class="cell" style="left:161px;top:843px;width:108px;height:22px;padding-left:3px">Content production</div>
<div class="cell" style="left:269px;top:843px;width:56px;height:22px;padding-left:2px;letter-spacing:-0.3px">HFDL</div>
<div class="cell" style="left:325px;top:843px;width:137px;height:22px;text-align:right;padding-right:2px;letter-spacing:0.14px">13.04.2025 15:03:25.161</div>
<div class="cell" style="left:462px;top:843px;width:85px;height:22px;padding-left:3px;letter-spacing:-0.15px">RA73120</div>
<div class="cell" style="left:547px;top:843px;width:230px;height:22px;padding-left:2px;letter-spacing:-0.6px">REYKJAVIK, ICELAND</div>
<div class="cell" style="left:777px;top:843px;width:88px;height:22px;padding-left:2px;letter-spacing:-0.45px;border-right:none">PSK-2A</div>
<div style="left:78px;top:865px;width:83px;height:7px;background:#ff0000"></div>
<div style="left:77px;top:865px;width:1px;height:7px;background:#d8d8d8"></div>
<div style="left:160px;top:865px;width:1px;height:7px;background:#d8d8d8"></div>
<div style="left:268px;top:865px;width:1px;height:7px;background:#d8d8d8"></div>
<div style="left:324px;top:865px;width:1px;height:7px;background:#d8d8d8"></div>
<div style="left:461px;top:865px;width:1px;height:7px;background:#d8d8d8"></div>
<div style="left:546px;top:865px;width:1px;height:7px;background:#d8d8d8"></div>
<div style="left:776px;top:865px;width:1px;height:7px;background:#d8d8d8"></div>
<span class="t" style="left:223px;top:866px;font-size:9px">.</span>
<div style="left:28px;top:872px;width:1272px;height:17px;background:#eef2f7"></div>
<div style="left:44px;top:873px;width:815px;height:15px;background:#cdcdcd"></div>
<svg style="left:32px;top:876px" width="7" height="9" viewBox="0 0 7 9"><path d="M5.500 1L1.500 4.500 5.500 8" fill="none" stroke="#505050" stroke-width="1.700"/></svg>
<div style="left:461px;top:292px;width:87px;height:552px;border:3px solid #f00"></div>
<div style="left:436px;top:197px;width:391px;height:79px;background:#000"></div>
<span class="bx" style="left:438px;top:197px;letter-spacing:-0.1px">&lt;decoderResult0&gt;</span>
<span class="bx" style="left:446px;top:216px;">&lt;startTime&gt;2025-06-19T02:58:44.031Z&lt;/startTime&gt;</span>
<span class="bx" style="left:446px;top:235px;">&lt;newInfoUnit time="2025-06-19T02:58:44.031Z"/&gt;</span>
<span class="bx" style="left:446px;top:254px;">&lt;text1&gt;</span>
<div style="left:544px;top:895px;width:179px;height:26px;border:3px solid #f00;background:#e1e1e1"></div>
<svg style="left:551px;top:903px" width="13" height="8" viewBox="0 0 13 8"><path d="M1 1h11L6.500 7z" fill="#3a8fd6" stroke="#1e5c94" stroke-width="0.800"/></svg>
<span class="t" style="left:567px;top:901px;letter-spacing:-0.094px;">Advanced sorting [ Sender ID ]</span>
<div class="btn" style="left:1242px;top:898px;width:58px;height:20px;"></div>
<svg style="left:1245px;top:900px" width="16" height="16" viewBox="0 0 16 16"><defs><radialGradient id="gl" cx="0.420" cy="0.350" r="0.650"><stop offset="0" stop-color="#7cc4ff"/><stop offset="0.500" stop-color="#2f86dc"/><stop offset="1" stop-color="#1a5fae"/></radialGradient><clipPath id="gc"><circle cx="8" cy="8" r="7.800"/></clipPath></defs><circle cx="8" cy="8" r="7.800" fill="url(#gl)"/><g clip-path="url(#gc)" fill="#4aa83a"><path d="M2 3.500C4 1 7 0 9 0.300 8 2 6.500 2.500 5.500 4 4.500 4.800 3 4.500 2 3.500z"/><path d="M10 0.500c3 0.500 6 3 6 7.500 0 3-1 5-2.500 6 -1-1.500 0-3-1-4.500-1-1-2.500-1-2.500-2.500s2-1.500 2-3-1.500-2-2-3.500z"/><path d="M1.500 9.500c1.500 0 3 1 3.500 2.500s2 2 1.500 3.500C4 15 1.500 12.500 1.500 9.500z"/></g><circle cx="8" cy="8" r="7.500" fill="none" stroke="#2a6a3a" stroke-opacity="0.350" stroke-width="0.600"/></svg>
<span class="t" style="left:1262px;top:902px;letter-spacing:-0.466px;">Map</span>
<div class="btn" style="left:15px;top:944px;width:73px;height:21px;"></div>
<span class="t" style="left:28px;top:948px;">Export</span>
<svg style="left:74px;top:952px" width="8" height="5"><path d="M0 0.500h8L4 4.500z" fill="#000"/></svg>
<div class="btn" style="left:96px;top:944px;width:73px;height:21px;"></div>
<span class="t" style="left:110px;top:948px;">Delete</span>
<svg style="left:156px;top:952px" width="8" height="5"><path d="M0 0.500h8L4 4.500z" fill="#000"/></svg>
<div class="btn" style="left:177px;top:944px;width:73px;height:21px;"></div>
<span class="t" style="left:187px;top:948px;">Add flag</span>
<svg style="left:237px;top:952px" width="8" height="5"><path d="M0 0.500h8L4 4.500z" fill="#000"/></svg>
<div class="btn" style="left:258px;top:944px;width:78px;height:21px;"></div>
<span class="t" style="left:260px;top:948px;">Remove flag</span>
<svg style="left:322px;top:952px" width="8" height="5"><path d="M0 0.500h8L4 4.500z" fill="#000"/></svg>
<div class="btn" style="left:344px;top:944px;width:85px;height:21px;background:#cfcfcf;border-color:#bcbcbc"></div>
<span class="t" style="left:347px;top:948px;color:#8a8a8a">System action</span>
<svg style="left:417px;top:952px" width="8" height="5"><path d="M0 0.500h8L4 4.500z" fill="#9a9a9a"/></svg>
<div class="btn" style="left:1100px;top:944px;width:77px;height:21px;"></div>
<span class="t" style="left:1102px;top:948px;">Export table...</span>
<div class="btn" style="left:1200px;top:944px;width:23px;height:21px;"></div>
<span class="t" style="left:1206px;top:948px;">|&lt;</span>
<div class="btn" style="left:1226px;top:944px;width:23px;height:21px;"></div>
<span class="t" style="left:1234px;top:948px;">&lt;</span>
<span class="t" style="left:1252px;top:948px;letter-spacing:-0.25px">Page 49</span>
<div class="btn" style="left:1292px;top:944px;width:23px;height:21px;"></div>
<span class="t" style="left:1300px;top:948px;">&gt;</span>
<div style="left:1px;top:978px;width:1330px;height:23px;background:#e9f0f8"></div>
<span class="t" style="left:3px;top:986px;letter-spacing:-0.08px">Advanced filter ACTIVE, Displaying 245000 results</span>
<div style="left:655px;top:982px;width:1px;height:16px;background:#d0d4d9"></div>
<div style="left:1311px;top:982px;width:1px;height:16px;background:#d0d4d9"></div>
<div style="left:864px;top:293px;width:470px;height:700px;display:none"></div>
<div style="left:866px;top:540px;width:466px;height:340px;background:#e9f0f8;border:1px solid #5a5a5a;border-top:none"></div>
<div class="hdr" style="left:872px;top:542px;width:420px;height:26px;"></div>
<span class="t" style="left:876px;top:549px;">Content</span>
<svg style="left:1294px;top:549px" width="32" height="13" viewBox="0 0 32 13"><rect x="1.500" y="1.500" width="10" height="10" rx="1.800" fill="none" stroke="#666"/><rect x="3.500" y="5.500" width="4" height="4" fill="none" stroke="#555" stroke-width="0.900"/><path d="M5.500 5.500v-2h4v4h-2" fill="none" stroke="#555" stroke-width="0.900"/><rect x="19.500" y="1.500" width="10" height="10" rx="1.800" fill="none" stroke="#666"/><path d="M22 4l5 5M27 4l-5 5" stroke="#555" stroke-width="0.900"/></svg>
<div style="left:871px;top:590px;width:455px;height:288px;background:#f9f9f9;border:1px solid #dcdcdc"></div>
<div style="left:872px;top:572px;width:58px;height:18px;background:#e9f0f8;border:1px solid #dfe5ec;border-bottom:none;text-align:center;line-height:18px">General</div>
<div style="left:930px;top:572px;width:52px;height:18px;background:#e9f0f8;border:1px solid #dfe5ec;border-bottom:none;text-align:center;line-height:18px">Signal</div>
<div style="left:981px;top:570px;width:67px;height:21px;background:#f9f9f9;border:1px solid #dcdcdc;border-bottom:none;text-align:center;line-height:21px">Content</div>
<div style="left:1048px;top:572px;width:59px;height:18px;background:#e9f0f8;border:1px solid #dfe5ec;border-bottom:none;text-align:center;line-height:18px">Position</div>
<div style="left:1107px;top:572px;width:126px;height:18px;background:#e9f0f8;border:1px solid #dfe5ec;border-bottom:none;text-align:center;line-height:18px">Matching frequencies</div>
<div style="left:1233px;top:572px;width:66px;height:18px;background:#e9f0f8;border:1px solid #dfe5ec;border-bottom:none;text-align:center;line-height:18px">Multi-Edit</div>
<span class="t" style="left:881px;top:601px;">Decoded text</span>
<div style="left:955px;top:607px;width:360px;height:1px;background:#a0a0a0"></div>
<div style="left:881px;top:616px;width:434px;height:60px;background:#fafafa;border:1px solid #828790"></div>
<div style="left:883px;top:619px;width:430px;height:19px;background:#d9d9d9"></div>
<svg style="left:888px;top:620px" width="13" height="17" viewBox="0 0 13 17"><path d="M0.500 0.500h8l4 4v12h-12z" fill="#d6e8fa" stroke="#4a86c5"/><path d="M8.500 0.500v4h4" fill="#fff" stroke="#4a86c5"/><path d="M2.500 7.500h8M2.500 9.500h8M2.500 11.500h8M2.500 13.500h8" stroke="#4a86c5" stroke-width="0.900"/></svg>
<span class="t" style="left:907px;top:622px;letter-spacing:0.08px">02:58:44 - 02:58:46 [2.1s], 20250619.025844.0031_10005_3479.dec</span>
<span class="t" style="left:1093px;top:672px;font-size:8px;color:#999;letter-spacing:0px">······</span>
<div class="btn" style="left:883px;top:682px;width:94px;height:20px;"></div>
<span class="t" style="left:886px;top:685px;font-size:12px">Text</span>
<svg style="left:962px;top:689px" width="11" height="7" viewBox="0 0 11 7"><path d="M1 1l4.500 4.500L10 1" fill="none" stroke="#333" stroke-width="1.100"/></svg>
<svg style="left:982px;top:684px" width="18" height="16" viewBox="0 0 18 16"><g transform="rotate(14 5 8)"><rect x="2.300" y="1.500" width="5" height="9" rx="1.500" fill="#3a3d42"/><ellipse cx="4.800" cy="11" rx="3.400" ry="3.600" fill="#2b2e33"/><ellipse cx="4.800" cy="11.800" rx="2.200" ry="2" fill="#3f7fc0"/></g><g transform="rotate(-14 13 8)"><rect x="10.700" y="1.500" width="5" height="9" rx="1.500" fill="#3a3d42"/><ellipse cx="13.200" cy="11" rx="3.400" ry="3.600" fill="#2b2e33"/><ellipse cx="13.200" cy="11.800" rx="2.200" ry="2" fill="#3f7fc0"/></g><rect x="7" y="3" width="4" height="4" fill="#55595f"/></svg>
<svg style="left:1009px;top:684px" width="17" height="17" viewBox="0 0 17 17"><path d="M5.500 0.500h7l3 3v9h-10z" fill="#f4f4f4" stroke="#b0b0b0"/><path d="M1.500 4.500h7l3 3v9h-10z" fill="#fbfbfb" stroke="#a8a8a8"/><path d="M3.500 9.500h5M3.500 11.500h5M3.500 13.500h5" stroke="#c8c8c8"/></svg>
<svg style="left:1035px;top:684px" width="17" height="17" viewBox="0 0 17 17"><defs><linearGradient id="fl" x1="0" x2="0" y1="0" y2="1"><stop offset="0" stop-color="#ffffff"/><stop offset="0.600" stop-color="#d4e6f7"/><stop offset="1" stop-color="#4f93dc"/></linearGradient></defs><rect x="0.500" y="0.500" width="16" height="16" rx="1.200" fill="#151515"/><rect x="2.500" y="1.800" width="12" height="7.200" fill="url(#fl)"/><path d="M3.500 3.500h10M3.500 5.200h10" stroke="#b9cde0" stroke-width="0.600"/><rect x="4.500" y="11" width="8.500" height="5" fill="#c4c8cc"/><rect x="5.800" y="12" width="2" height="3.200" fill="#151515"/></svg>
<svg style="left:1061px;top:684px" width="17" height="17" viewBox="0 0 17 17"><path d="M4.500 3.500l3-3h8v10l-3 3" fill="#cfd5db" stroke="#6d7680"/><path d="M1.500 4.500h10v12h-10z" fill="#e6eaee" stroke="#6d7680" transform="skewX(-8) translate(2,0)"/><path d="M5 8h5M5 10.500h5M5 13h5" stroke="#8a939c" stroke-width="0.900"/></svg>
<svg style="left:1087px;top:686px" width="17" height="13" viewBox="0 0 17 13"><path d="M0.500 2h11M0.500 5.500h11M0.500 9h11" stroke="#3f78b8" stroke-width="1.600"/><path d="M0.500 3.500h9M0.500 10.500h9" stroke="#222" stroke-width="0.800"/><rect x="12" y="4" width="4" height="4" fill="#222"/></svg>
<div style="left:881px;top:706px;width:434px;height:157px;background:#fff;border:1px solid #0078d7"></div>
<div style="left:1297px;top:707px;width:17px;height:155px;background:#e9f0f8"></div>
<div style="left:1298px;top:809px;width:15px;height:31px;background:#c8c8c8"></div>
<svg style="left:1300px;top:712px" width="11" height="7" viewBox="0 0 11 7"><path d="M1 6l4.500-4.500L10 6" fill="none" stroke="#444" stroke-width="1.400"/></svg>
<svg style="left:1300px;top:849px" width="11" height="7" viewBox="0 0 11 7"><path d="M1 1l4.500 4.500L10 1" fill="none" stroke="#444" stroke-width="1.400"/></svg>
<span class="ct" style="left:886.2px;top:706px;letter-spacing:-0.590px;">Parsed:</span>
<span class="ct" style="left:886.2px;top:725px;letter-spacing:-0.972px;">ACARS:</span>
<span class="ct" style="left:890.7px;top:744px;letter-spacing:-0.510px;">Reassembly: skipped</span>
<span class="ct" style="left:890.7px;top:763px;letter-spacing:-0.908px;">Reg:</span>
<span class="ct" style="left:925.5px;top:763px;letter-spacing:0.307px;">RA73118</span>
<span class="ct" style="left:996.2px;top:763px;letter-spacing:-0.228px;">Flight: SU1075</span>
<span class="ct" style="left:890.7px;top:782px;letter-spacing:-0.143px;">Mode: 2 Label: H1 Blk id: 1 More: 0 Ack: ! Msg num: F91A</span>
<span class="ct" style="left:890.7px;top:801px;letter-spacing:-0.351px;">Sublabel: M1</span>
<span class="ct" style="left:890.7px;top:820px;letter-spacing:-0.496px;">Message:</span>
<div style="left:894px;top:839px;width:355px;height:19px;background:#000080"></div>
<span class="ct" style="left:894.8px;top:839px;color:#ffff00;letter-spacing:0.165px;">PRG/FNAFL1075/DTUUEE,24L,84,044832,29676A</span>
<div style="left:921px;top:762px;width:75px;height:22px;border:3px solid #f00"></div>
<span class="t" style="left:1271px;top:872px;font-size:11px;color:#444;font-weight:bold">&gt;</span>
<div style="left:850px;top:93px;width:490px;height:250px;background:#fcb500"></div>
<div style="left:851px;top:119px;width:490px;height:222px;background:#e9f0f8"></div>
<svg style="left:854px;top:98px" width="16" height="16" viewBox="0 0 16 16"><rect x="0" y="0" width="16" height="16" fill="#fff"/><path d="M0 15.500h16M15.500 0v16" stroke="#444"/><text x="0.300" y="5.800" font-size="6.500" font-weight="bold" font-family="Liberation Sans, sans-serif" fill="#1414e6" textLength="14.500" lengthAdjust="spacingAndGlyphs">D::0</text><path d="M5.300 13.500L8 7.200l2.700 6.300M6.300 11.400h3.400" fill="none" stroke="#000" stroke-width="1.200"/><path d="M4 14h8" stroke="#000" stroke-width="1"/></svg>
<span class="t" style="left:876px;top:98px;font-size:12px;letter-spacing:-0.38px;line-height:16px;height:16px">The 2025 Super Frequency List</span>
<svg style="left:1225px;top:98px" width="107" height="16" viewBox="0 0 107 16"><path d="M3 8.500h10" stroke="#000" stroke-width="1.100"/><rect x="48.500" y="3.500" width="9" height="9" fill="none" stroke="#c9a000" stroke-width="1"/><path d="M94 3l10 10M104 3l-10 10" stroke="#000" stroke-width="1.100"/></svg>
<div style="left:852px;top:140px;width:480px;height:1px;background:#fff"></div>
<div style="left:852px;top:141px;width:480px;height:1px;background:#d5d9de"></div>
<div style="left:918px;top:123px;width:53px;height:17px;background:#e9f0f8;border-left:1px solid #fff;border-top:1px solid #fff;border-right:2px solid #787878"></div>
<span class="t" style="left:923px;top:124px;font-size:11px;letter-spacing:-0.22px;transform:scaleY(1.15);transform-origin:0 50%"><u>T</u>ext files</span>
<div style="left:971px;top:123px;width:180px;height:17px;background:#e9f0f8;border-left:1px solid #fff;border-top:1px solid #fff;border-right:2px solid #787878"></div>
<span class="t" style="left:976px;top:124px;font-size:11px;letter-spacing:-0.22px;transform:scaleY(1.15);transform-origin:0 50%">Additional text files and screenshots</span>
<div style="left:1151px;top:123px;width:42px;height:17px;background:#e9f0f8;border-left:1px solid #fff;border-top:1px solid #fff;border-right:2px solid #787878"></div>
<span class="t" style="left:1156px;top:124px;font-size:11px;letter-spacing:-0.22px;transform:scaleY(1.15);transform-origin:0 50%"><u>A</u>bout</span>
<div style="left:852px;top:120px;width:66px;height:21px;background:#e9f0f8;border-left:1px solid #fff;border-top:1px solid #fff;border-right:2px solid #777"></div>
<span class="t" style="left:859px;top:122px;font-size:11px;letter-spacing:-0.1px;transform:scaleY(1.15);transform-origin:0 50%"><u>D</u>atabases</span>
<div style="left:867px;top:162px;width:85px;height:33px;background:#e9f0f8;border-top:1px solid #fff;border-left:1px solid #fff;border-right:1px solid #555;border-bottom:1px solid #555;box-shadow:inset -1px -1px 0 #a0a0a0"></div>
<div style="left:867px;top:162px;width:85px;height:33px;text-align:center;line-height:34px;font-size:13px;letter-spacing:-0.1px"><u>O</u>ldFreq</div>
<div style="left:867px;top:210px;width:85px;height:33px;background:#e9f0f8;border:1px solid #333;box-shadow:inset 1px 1px 0 #fff,inset -1px -1px 0 #6a6a6a,inset -2px -2px 0 #a0a0a0"></div>
<div style="left:871px;top:214px;width:77px;height:25px;border:1px dotted #000"></div>
<div style="left:867px;top:210px;width:85px;height:33px;text-align:center;line-height:34px;font-size:13px;letter-spacing:-0.1px"><u>U</u>T2025</div>
<div style="left:867px;top:258px;width:85px;height:33px;background:#e9f0f8;border-top:1px solid #fff;border-left:1px solid #fff;border-right:1px solid #555;border-bottom:1px solid #555;box-shadow:inset -1px -1px 0 #a0a0a0"></div>
<div style="left:867px;top:258px;width:85px;height:33px;text-align:center;line-height:34px;font-size:13px;letter-spacing:-0.1px"><u>B</u>C2025</div>
<span class="t" style="left:967px;top:163px;font-size:13px;line-height:16px;height:16px;letter-spacing:-0.08px">Formerly active frequencies</span>
<span class="t" style="left:967px;top:211px;font-size:13px;line-height:16px;height:16px;letter-spacing:0.17px">Utility stations 2025</span>
<span class="t" style="left:967px;top:259px;font-size:13px;line-height:16px;height:16px;letter-spacing:0.13px">Broadcast stations 2025</span>
<div style="left:764px;top:337px;width:570px;height:203px;background:#fcb500"></div>
<svg style="left:773px;top:344px" width="16" height="16" viewBox="0 0 16 16"><rect x="0" y="0" width="16" height="16" fill="#fff"/><path d="M0 15.500h16M15.500 0v16" stroke="#444"/><text x="0.300" y="5.800" font-size="6.500" font-weight="bold" font-family="Liberation Sans, sans-serif" fill="#1414e6" textLength="14.500" lengthAdjust="spacingAndGlyphs">D::0</text><path d="M5.300 13.500L8 7.200l2.700 6.300M6.300 11.400h3.400" fill="none" stroke="#000" stroke-width="1.200"/><path d="M4 14h8" stroke="#000" stroke-width="1"/></svg>
<span class="t" style="left:794px;top:345px;font-size:12px;letter-spacing:-0.314px;;line-height:16px;height:16px">UT2025- sorted by Freq.</span>
<svg style="left:1205px;top:344px" width="120" height="16" viewBox="0 0 120 16"><path d="M7 8.500h10" stroke="#000" stroke-width="1.100"/><rect x="52.500" y="3.500" width="9" height="9" fill="none" stroke="#000" stroke-width="1.100"/><path d="M98 3l10 10M108 3l-10 10" stroke="#000" stroke-width="1.100"/></svg>
<div style="left:765px;top:368px;width:565px;height:21px;background:#f5f8fc"></div>
<span class="t" style="left:772px;top:371px;font-size:12px;line-height:15px;height:15px"><u>F</u>ile</span>
<span class="t" style="left:803px;top:371px;font-size:12px;line-height:15px;height:15px"><u>S</u>earch</span>
<span class="t" style="left:852px;top:371px;font-size:12px;line-height:15px;height:15px"><u>E</u>dit</span>
<span class="t" style="left:886px;top:371px;font-size:12px;line-height:15px;height:15px"><u>H</u>elp</span>
<div style="left:765px;top:388px;width:565px;height:149px;background:#f9f9f9;border-top:2px solid #696969;border-left:1px solid #696969"></div>
<div class="ut f" style="left:766px;top:390px;width:99px;height:21px;background:#e9f0f8;border-right:1px solid #222;border-bottom:1px solid #222;font-size:14px;letter-spacing:0.5px">Freq.</div>
<div class="ut" style="left:865px;top:390px;width:85px;height:21px;background:#e9f0f8;border-right:1px solid #222;border-bottom:1px solid #222">Callsign</div>
<div class="ut" style="left:950px;top:390px;width:139px;height:21px;background:#e9f0f8;border-right:1px solid #222;border-bottom:1px solid #222">Station</div>
<div class="ut" style="left:1089px;top:390px;width:65px;height:21px;background:#e9f0f8;border-right:1px solid #222;border-bottom:1px solid #222">Country</div>
<div class="ut" style="left:1154px;top:390px;width:87px;height:21px;background:#e9f0f8;border-right:1px solid #222;border-bottom:1px solid #222">Modulation</div>
<div class="ut" style="left:1241px;top:390px;width:69px;height:21px;background:#e9f0f8;border-right:1px solid #222;border-bottom:1px solid #222">Details</div>
<div class="ut f" style="left:766px;top:411px;width:99px;height:21px;">17982,0</div>
<div class="ut" style="left:865px;top:411px;width:85px;height:21px;"></div>
<div class="ut" style="left:950px;top:411px;width:139px;height:21px;">BAF Boa Vista</div>
<div class="ut" style="left:1089px;top:411px;width:65px;height:21px;">BRA</div>
<div class="ut" style="left:1154px;top:411px;width:87px;height:21px;">SSB</div>
<div class="ut" style="left:1241px;top:411px;width:69px;height:21px;"></div>
<div class="ut f" style="left:766px;top:432px;width:99px;height:21px;">17985,0</div>
<div class="ut" style="left:865px;top:432px;width:85px;height:21px;"></div>
<div class="ut" style="left:950px;top:432px;width:139px;height:21px;">AMS</div>
<div class="ut" style="left:1089px;top:432px;width:65px;height:21px;"></div>
<div class="ut" style="left:1154px;top:432px;width:87px;height:21px;">SSB</div>
<div class="ut" style="left:1241px;top:432px;width:69px;height:21px;"></div>
<div class="ut f" style="left:766px;top:453px;width:99px;height:21px;background:#003399;color:#fff;">17985,0</div>
<div class="ut" style="left:865px;top:453px;width:85px;height:21px;background:#003399;color:#fff;">+H03+</div>
<div class="ut" style="left:950px;top:453px;width:139px;height:21px;background:#003399;color:#fff;">Reykjavik Air</div>
<div class="ut" style="left:1089px;top:453px;width:65px;height:21px;background:#003399;color:#fff;">ICE</div>
<div class="ut" style="left:1154px;top:453px;width:87px;height:21px;background:#003399;color:#fff;">DIG</div>
<div class="ut" style="left:1241px;top:453px;width:69px;height:21px;background:#003399;color:#fff;">HFDL</div>
<div class="ut f" style="left:766px;top:474px;width:99px;height:21px;">17988,0</div>
<div class="ut" style="left:865px;top:474px;width:85px;height:21px;"></div>
<div class="ut" style="left:950px;top:474px;width:139px;height:21px;">AMS</div>
<div class="ut" style="left:1089px;top:474px;width:65px;height:21px;"></div>
<div class="ut" style="left:1154px;top:474px;width:87px;height:21px;">SSB</div>
<div class="ut" style="left:1241px;top:474px;width:69px;height:21px;"></div>
<div class="ut f" style="left:766px;top:495px;width:99px;height:21px;">17991,0</div>
<div class="ut" style="left:865px;top:495px;width:85px;height:21px;"></div>
<div class="ut" style="left:950px;top:495px;width:139px;height:21px;">AMS</div>
<div class="ut" style="left:1089px;top:495px;width:65px;height:21px;"></div>
<div class="ut" style="left:1154px;top:495px;width:87px;height:21px;">SSB</div>
<div class="ut" style="left:1241px;top:495px;width:69px;height:21px;"></div>
<div class="ut f" style="left:766px;top:516px;width:99px;height:21px;">17991,0</div>
<div class="ut" style="left:865px;top:516px;width:85px;height:21px;">DHM 91</div>
<div class="ut" style="left:950px;top:516px;width:139px;height:21px;">GAF Muenster</div>
<div class="ut" style="left:1089px;top:516px;width:65px;height:21px;">GER</div>
<div class="ut" style="left:1154px;top:516px;width:87px;height:21px;">SSB</div>
<div class="ut" style="left:1241px;top:516px;width:69px;height:21px;"></div>
<div style="left:765px;top:537px;width:565px;height:2px;background:#e9f0f8;border-top:1px solid #a8a8a8"></div>
<div style="left:1310px;top:390px;width:20px;height:147px;background:#e9f0f8"></div>
<div style="left:1313px;top:495px;width:15px;height:17px;background:#c8c8c8"></div>
<svg style="left:1315px;top:396px" width="11" height="7" viewBox="0 0 11 7"><path d="M1 6l4.500-4.500L10 6" fill="none" stroke="#444" stroke-width="1.400"/></svg>
<svg style="left:1315px;top:524px" width="11" height="7" viewBox="0 0 11 7"><path d="M1 1l4.500 4.500L10 1" fill="none" stroke="#444" stroke-width="1.400"/></svg>
<div style="left:0px;top:0px;width:1px;height:1003px;background:#fcb500"></div>
<div style="left:1331px;top:0px;width:1px;height:93px;background:#fcb500"></div>
<div style="left:1331px;top:879px;width:1px;height:124px;background:#fcb500"></div>
<div style="left:0px;top:1001px;width:1332px;height:2px;background:#fcb500"></div>
</body></html>
